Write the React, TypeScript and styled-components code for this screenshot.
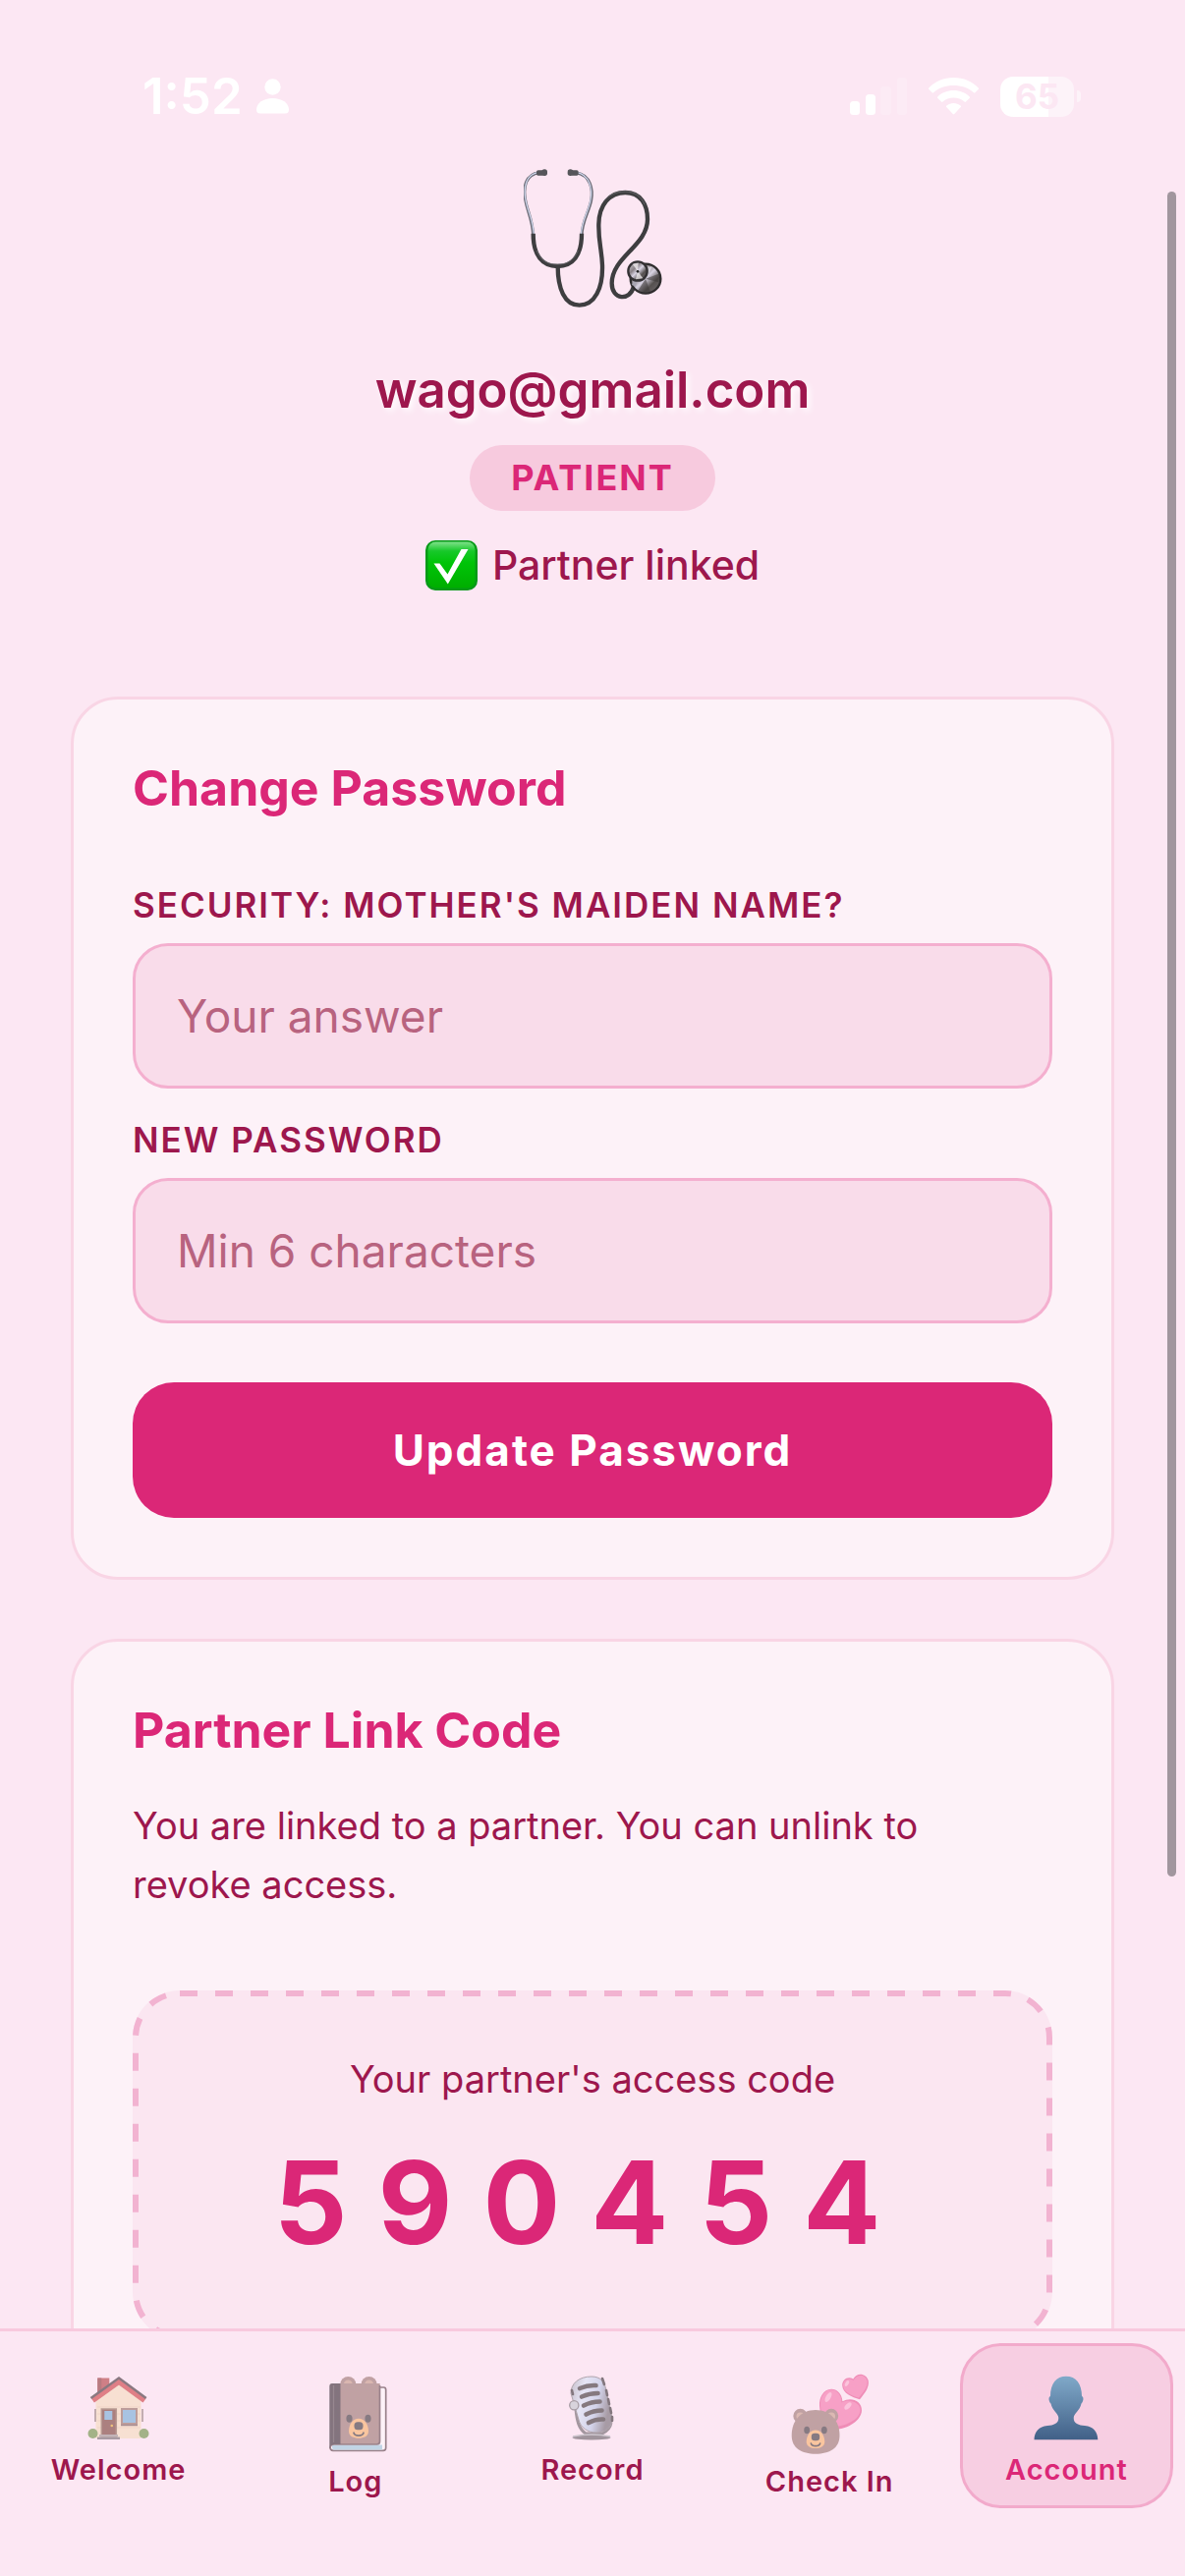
import React from "react";
import styled, { createGlobalStyle } from "styled-components";

const color = {
  page: "#fce7f3",
  card: "#fdf2f8",
  cardBorder: "#f9d5e5",
  field: "#f9dcea",
  fieldBorder: "#f4afcf",
  placeholder: "#b8637f",
  pill: "#f7cade",
  line: "#f8c9de",
  active: "#f7cee2",
  activeBorder: "#f2aacb",
  dash: "#f2b3d1",
  deep: "#9d174d",
  accent: "#db2777",
};

const GlobalStyle = createGlobalStyle`
  *, *::before, *::after { box-sizing: border-box; }
  body {
    margin: 0;
    background: ${color.page};
    color: ${color.deep};
    font-family: Inter, "Liberation Sans", sans-serif;
    -webkit-font-smoothing: antialiased;
  }
  h1, h2, p { margin: 0; }
`;

const Screen = styled.div`
  position: relative;
  display: flex;
  flex-direction: column;
  height: 100vh;
  overflow: hidden;
`;

const StatusBar = styled.header`
  flex: none;
  display: flex;
  align-items: center;
  justify-content: space-between;
  padding: 68px 106px 0 145px;
  color: #fff;
`;

const StatusGroup = styled.div<{ $gap: number }>`
  display: flex;
  align-items: center;
  gap: ${(p) => p.$gap}px;
`;

const Clock = styled.time`
  font-size: 51px;
  line-height: 60px;
  font-weight: 600;
`;

const Battery = styled.div`
  display: flex;
  align-items: center;
  gap: 3px;
`;

const BatteryBody = styled.span`
  width: 75px;
  height: 41px;
  border-radius: 13px;
  background: linear-gradient(90deg, #fff 65%, #fdf3f9 65%);
  color: ${color.page};
  font-size: 35px;
  line-height: 41px;
  font-weight: 700;
  text-align: center;
`;

const BatteryTip = styled.span`
  width: 4px;
  height: 12px;
  border-radius: 0 6px 6px 0;
  background: #fdf3f9;
`;

const Content = styled.main`
  flex: 1;
  min-height: 0;
  overflow-y: auto;
  scrollbar-width: none;
  padding: 44px 72px 0;
`;

const Profile = styled.section`
  display: flex;
  flex-direction: column;
  align-items: center;
  margin-bottom: 108px;
`;

const Email = styled.h1`
  margin-top: 51px;
  font-size: 51px;
  line-height: 66px;
  font-weight: 600;
  text-shadow: 3px 3px 6px rgba(255, 255, 255, 0.9);
`;

const RolePill = styled.span`
  margin-top: 23px;
  padding: 12px 42px;
  border-radius: 34px;
  background: ${color.pill};
  color: ${color.accent};
  font-size: 36px;
  line-height: 43px;
  font-weight: 700;
  letter-spacing: 2px;
`;

const LinkStatus = styled.p`
  display: flex;
  align-items: center;
  gap: 15px;
  margin-top: 30px;
  font-size: 41px;
  line-height: 51px;
  font-weight: 500;
`;

const Card = styled.section`
  margin-bottom: 60px;
  padding: 60px;
  border: 3px solid ${color.cardBorder};
  border-radius: 48px;
  background: ${color.card};
`;

const CardTitle = styled.h2`
  margin-bottom: 36px;
  color: ${color.accent};
  font-size: 50px;
  line-height: 61px;
  font-weight: 700;
`;

const Field = styled.div`
  display: flex;
  flex-direction: column;
  gap: 17px;
  padding-top: 31px;
`;

const FieldLabel = styled.label`
  font-size: 35px;
  line-height: 43px;
  font-weight: 600;
  letter-spacing: 2px;
`;

const TextInput = styled.input`
  width: 100%;
  height: 148px;
  padding: 0 42px;
  border: 3px solid ${color.fieldBorder};
  border-radius: 36px;
  outline: none;
  background: ${color.field};
  color: ${color.deep};
  font: 400 46px/58px Inter, "Liberation Sans", sans-serif;
  &::placeholder {
    color: ${color.placeholder};
    opacity: 1;
  }
`;

const PrimaryButton = styled.button`
  display: block;
  width: 100%;
  height: 138px;
  margin-top: 60px;
  padding: 0;
  border: 0;
  border-radius: 42px;
  background: ${color.accent};
  color: #fff;
  font: 700 44px/54px Inter, "Liberation Sans", sans-serif;
  letter-spacing: 2px;
`;

const Note = styled.p`
  padding-right: 36px;
  font-size: 38px;
  line-height: 60px;
`;

const CodeBox = styled.div`
  position: relative;
  margin-top: 78px;
  padding: 66px;
  border-radius: 48px;
  background: #fbe6f1;
  text-align: center;
`;

const DashedOutline = styled.svg`
  position: absolute;
  inset: 0;
  width: 100%;
  height: 100%;
  rect {
    x: 3px;
    y: 3px;
    width: calc(100% - 6px);
    height: calc(100% - 6px);
    rx: 45px;
    fill: none;
    stroke: ${color.dash};
    stroke-width: 6px;
    stroke-dasharray: 18px 18px;
  }
`;

const CodeCaption = styled.p`
  font-size: 38px;
  line-height: 48px;
`;

const Code = styled.p`
  margin-top: 29px;
  color: ${color.accent};
  font-size: 117px;
  line-height: 146px;
  font-weight: 700;
  letter-spacing: 31px;
`;

const ScrollThumb = styled.div`
  position: absolute;
  top: 195px;
  right: 9px;
  width: 9px;
  height: 1715px;
  border-radius: 5px;
  background: #a1969e;
`;

const TabBar = styled.nav`
  flex: none;
  display: grid;
  grid-template-columns: repeat(5, 1fr);
  align-items: start;
  min-height: 252px;
  padding-top: 12px;
  border-top: 3px solid ${color.line};
  background: ${color.page};
`;

const Tab = styled.a<{ $active?: boolean }>`
  display: flex;
  flex-direction: column;
  align-items: center;
  gap: 6px;
  margin: 0 12px;
  padding: 18px 0;
  border: 3px solid ${(p) => (p.$active ? color.activeBorder : "transparent")};
  border-radius: 42px;
  background: ${(p) => (p.$active ? color.active : "transparent")};
  color: ${(p) => (p.$active ? color.accent : color.deep)};
  font-size: 29px;
  line-height: 36px;
  font-weight: 600;
  letter-spacing: 1px;
  text-decoration: none;
`;

const PersonGlyph = () => (
  <svg width="33" height="36" viewBox="0 0 33 36" fill="#fff" aria-hidden="true">
    <circle cx="16.500" cy="8.500" r="8.200" />
    <path d="M4 35.500C1 35.500 0 34 0 31.500C0 25 7 20 16.500 20S33 25 33 31.500C33 34 32 35.500 29 35.500Z" />
  </svg>
);

const SignalGlyph = () => (
  <svg width="58" height="38" viewBox="0 0 58 38" fill="#fff" aria-hidden="true">
    <rect x="0" y="24" width="10" height="14" rx="3.500" />
    <rect x="16" y="17" width="10" height="21" rx="3.500" />
    <rect x="31" y="9" width="11" height="29" rx="3.500" opacity="0.200" />
    <rect x="48" y="0" width="10" height="38" rx="3.500" opacity="0.200" />
  </svg>
);

const WifiGlyph = () => (
  <svg width="51" height="38" viewBox="0 0 51 38" fill="#fff" aria-hidden="true">
    <path d="M25.500 0C35.500 0 44.500 4 50.500 10.200C51.200 10.900 51.200 11.400 50.600 12L47.400 15.200C46.900 15.700 46.400 15.700 45.900 15.200C40.500 10.300 33.500 8 25.500 8S10.500 10.300 5.100 15.200C4.600 15.700 4.100 15.700 3.600 15.200L0.400 12C-0.200 11.400 -0.200 10.900 0.500 10.200C6.500 4 15.500 0 25.500 0Z" />
    <path d="M25.500 13C31.800 13 37.300 15.300 41.500 19.200C42.200 19.900 42.200 20.300 41.600 20.900L38 24.500C37.500 25 37 25 36.500 24.500C33.500 22 29.800 20.500 25.500 20.500S17.500 22 14.500 24.500C14 25 13.500 25 13 24.500L9.400 20.900C8.800 20.300 8.800 19.900 9.500 19.200C13.700 15.300 19.200 13 25.500 13Z" />
    <path d="M25.500 26C28.200 26 30.600 26.900 32.600 28.400C33.200 28.900 33.200 29.400 32.700 29.900L26.500 36.700C25.800 37.400 25.200 37.400 24.500 36.700L18.300 29.900C17.800 29.400 17.800 28.900 18.400 28.400C20.400 26.900 22.800 26 25.500 26Z" />
  </svg>
);

const Stethoscope = () => (
  <svg width="141" height="141" viewBox="98 66 423 423" fill="none" role="img" aria-label="Stethoscope">
    <defs>
      <linearGradient id="disc" x1="0" y1="0" x2="1" y2="1">
        <stop offset="0" stopColor="#d9d5dc" />
        <stop offset="0.350" stopColor="#8b8388" />
        <stop offset="0.500" stopColor="#d8d3e2" />
        <stop offset="0.700" stopColor="#55504f" />
        <stop offset="1" stopColor="#777174" />
      </linearGradient>
    </defs>
    <g stroke="#6c6c76" strokeWidth="9">
      <path d="M145 77C103 82 97 122 102 155C108 195 124 215 127 268" />
      <path d="M258 77C303 84 310 130 304 162C297 198 277 222 275 268" />
    </g>
    <g stroke="#ccd3e8" strokeWidth="4">
      <path d="M145 76C104 81 98 122 103 155C109 195 126 215 129 268" />
      <path d="M258 76C302 83 308 130 302 162C295 198 275 222 273 268" />
    </g>
    <g fill="#56565a">
      <rect x="137" y="70" width="23" height="16" rx="5" />
      <rect x="153" y="67" width="17" height="20" rx="8" />
      <rect x="242" y="70" width="23" height="16" rx="5" />
      <rect x="232" y="67" width="17" height="20" rx="8" />
    </g>
    <g stroke="#3e3e40" strokeWidth="13">
      <path d="M127 263C127 330 155 363 201 363C248 363 275 330 275 263" />
      <path d="M202 363C202 430 222 482 268 482C315 482 340 430 338 360C336 310 326 290 327 235C328 175 360 138 408 138C455 138 476 175 476 220C476 300 367 335 367 415C367 467 422 470 434 425" />
    </g>
    <path d="M138 315C150 347 172 357 201 357C230 357 250 347 264 315" stroke="#75757a" strokeWidth="2" />
    <path d="M342 165C357 145 380 135 408 135C438 135 458 150 467 175" stroke="#75757a" strokeWidth="2" />
    <ellipse cx="470" cy="401" rx="46" ry="45" fill="url(#disc)" stroke="#2e2c2d" strokeWidth="7" />
    <path d="M470 401L445 440L485 442ZM470 401L510 412L514 385Z" fill="#3c3839" opacity="0.550" />
    <path d="M470 401L460 362L490 365Z" fill="#ece9f2" opacity="0.700" />
    <path d="M434 398L428 420L440 425L446 400Z" fill="#a9a6b2" />
    <circle cx="446" cy="378" r="29" fill="url(#disc)" stroke="#333133" strokeWidth="7" />
    <path d="M446 378L430 356L448 353ZM446 378L462 400L440 403Z" fill="#f3eff2" opacity="0.750" />
    <circle cx="446" cy="379" r="4" fill="#222" />
  </svg>
);

const CheckMark = () => (
  <svg width="53" height="51" viewBox="0 0 53 51" role="img" aria-label="Yes">
    <defs>
      <linearGradient id="tick" x1="0" y1="0" x2="0" y2="1">
        <stop offset="0" stopColor="#7fe08a" />
        <stop offset="0.200" stopColor="#17c82a" />
        <stop offset="0.450" stopColor="#00c408" />
        <stop offset="1" stopColor="#00ae00" />
      </linearGradient>
    </defs>
    <rect width="53" height="51" rx="10" fill="#069a17" />
    <rect x="2.500" y="1.500" width="48" height="47" rx="8" fill="url(#tick)" />
    <path d="M8.500 23.500H14.500L22.500 34.500L36.500 9H43.500L22.800 44.500Z" fill="#fff" />
  </svg>
);

const HouseIcon = () => (
  <svg width="84" height="84" viewBox="0 0 84 84" aria-hidden="true">
    <rect x="20.300" y="14.500" width="12" height="20" fill="#cf7f86" />
    <rect x="20.300" y="14.500" width="4" height="20" fill="#b87a80" />
    <path d="M18.500 37L42 18L64.500 37V76H18.500Z" fill="#f7e0d2" />
    <path d="M20 44H64M20 51H64M20 58H64M20 65H64" stroke="#f0d5c7" strokeWidth="1" />
    <path d="M18 46V59M66 46V59" stroke="#b09a9c" strokeWidth="1.500" />
    <path d="M15.500 37.500L42 18.500L68 37.500" fill="none" stroke="#df7f86" strokeWidth="5" />
    <path d="M13.500 35L42 14.500L69.700 35" fill="none" stroke="#8a7880" strokeWidth="2.500" />
    <rect x="24.300" y="46" width="15" height="28" fill="#ab807f" stroke="#b89a93" strokeWidth="1.500" />
    <rect x="27.300" y="48" width="8" height="9" fill="#a8c3e2" />
    <circle cx="34.800" cy="63" r="1.300" fill="#f0c27d" />
    <rect x="45" y="46" width="15" height="15" fill="#a8c3e2" stroke="#bd9d9b" strokeWidth="2" />
    <path d="M44 62.500H61" stroke="#a98f92" strokeWidth="1.500" />
    <circle cx="15.500" cy="71" r="5" fill="#a3b287" />
    <circle cx="67.500" cy="71" r="5" fill="#a3b287" />
    <rect x="22" y="72" width="19" height="2.500" fill="#c3b4b8" />
    <rect x="20" y="74.500" width="23" height="2.500" fill="#a99ba3" />
  </svg>
);

const BearFace = () => (
  <g>
    <ellipse cx="-9.500" cy="-10" rx="3.100" ry="4" fill="#867a82" />
    <ellipse cx="9.500" cy="-10" rx="3.100" ry="4" fill="#867a82" />
    <path d="M0 -10C6 -10 10 -4 10 3C10 8 5 10 0 10S-10 8 -10 3C-10 -4 -6 -10 0 -10Z" fill="#f9c59f" />
    <rect x="-4.500" y="-6.500" width="9" height="8" rx="3.500" fill="#867a82" />
    <path d="M-5 4.500C-4 8.300 4 8.300 5 4.500" fill="none" stroke="#867a82" strokeWidth="1.700" strokeLinecap="round" />
  </g>
);

const BearBookIcon = () => (
  <svg width="96" height="96" viewBox="0 0 96 96" aria-hidden="true">
    <path d="M72 24H76.500Q78.700 24 78.700 26.500V85.500Q78.700 88.300 76 88.300H25Q22 88.300 22 85" fill="#fdf2f8" stroke="#9a828b" strokeWidth="1.700" />
    <path d="M24 82.500H75V87.500H26Q24 87.500 24 85Z" fill="#c2d5e5" />
    <circle cx="40.300" cy="21" r="8" fill="#c0a1a3" />
    <circle cx="61.600" cy="21" r="8" fill="#c0a1a3" />
    <circle cx="40.300" cy="21" r="4.500" fill="#d9b6b0" />
    <circle cx="61.600" cy="21" r="4.500" fill="#d9b6b0" />
    <path d="M32 20H72.700V79Q72.700 82 69.500 82H32Z" fill="#c0a1a3" />
    <path d="M72.500 22V79Q72.500 82 69.500 82H26Q22 82 22 86" fill="none" stroke="#9a828b" strokeWidth="1.700" />
    <path d="M24 20H32.500V82H26Q22.500 82 21.300 86V23Q21.300 20 24 20Z" fill="#83747e" />
    <path d="M25.500 22V80" stroke="#978890" strokeWidth="1.300" />
    <g transform="translate(51 65.700)">
      <BearFace />
    </g>
  </svg>
);

const MicIcon = () => (
  <svg width="84" height="84" viewBox="0 0 84 84" aria-hidden="true">
    <defs>
      <linearGradient id="mic" x1="0" y1="0" x2="1" y2="0.300">
        <stop offset="0" stopColor="#c5bdc8" />
        <stop offset="0.350" stopColor="#e6e5f5" />
        <stop offset="0.700" stopColor="#d3d3ea" />
        <stop offset="1" stopColor="#a79ba5" />
      </linearGradient>
    </defs>
    <path d="M25 46C26 58 28 66 35 71H52C56 69 60 66 61 60" fill="none" stroke="#a3979f" strokeWidth="3" />
    <path d="M20 30C20 20 28 13 41 13C50 13 54 18 55.500 25L62 55C63 65 54 70 46 70C37 70 30 65 28 57Z" fill="url(#mic)" stroke="#b0a5ad" strokeWidth="1" />
    <path d="M52 15L54 21M56 27L57 32M58 36L59 41M60 45L61 50M62 54V58M21 27L22 31" stroke="#83777e" strokeWidth="2.600" strokeLinecap="round" />
    <path d="M29 25Q37 21.500 45.500 22M31 33.500Q39 30 47.500 30M33 42.500Q41 38.500 49.500 38.500M35.500 51.500Q43 47.500 51.500 47.500M38 60Q45 56 53 56.500" fill="none" stroke="#85797f" strokeWidth="4.600" strokeLinecap="round" />
    <circle cx="23.300" cy="42.300" r="4.600" fill="#d8d3dc" stroke="#a79ca4" strokeWidth="1.300" />
    <ellipse cx="41" cy="75" rx="19.500" ry="2.500" fill="#a0949c" />
    <path d="M22 74Q41 70 60 74" stroke="#cbc4cc" strokeWidth="1.300" fill="none" />
  </svg>
);

const BearHeartsIcon = () => (
  <svg width="96" height="96" viewBox="0 0 96 96" aria-hidden="true">
    <path d="M61.400 38.300C61 30 55 25.500 50 25.700C42 26 37.500 34 38 43C38.500 55 46 64 54 67C67 66 80.500 58 81 47.500C81.500 38 70 33 61.400 38.300Z" fill="#ef8db7" />
    <path d="M60.500 39.500C60.500 31 55 26.300 50 26.500C43 26.500 38.500 34 39 43C40 54 46 61 54 64C66 63 79 56 79.500 47.500C80 39 68 35 60.500 39.500Z" fill="#f7a0c6" />
    <ellipse cx="47" cy="34" rx="2.500" ry="5.500" transform="rotate(30 47 34)" fill="#fbc4dc" />
    <ellipse cx="67" cy="43" rx="2.300" ry="4.500" transform="rotate(45 67 43)" fill="#fbc4dc" />
    <path d="M72.300 15.500C67 12 61 16 61.200 22C61.500 30 71 34 79 36.300C84 30 89 24 87.700 17C86 10 76 8 72.300 15.500Z" fill="#ef8db7" />
    <path d="M72.500 17C67.500 13.500 62 17 62 22C62.500 29 71 32.500 78 34.500C83 28.500 87.500 23 86.500 17.500C85 11 76.500 9.500 72.500 17Z" fill="#f7a0c6" />
    <ellipse cx="66" cy="20" rx="1.700" ry="3.200" transform="rotate(30 66 20)" fill="#fbc4dc" />
    <circle cx="18.500" cy="53" r="7.200" fill="#c0a1a3" />
    <circle cx="50" cy="53" r="7.200" fill="#c0a1a3" />
    <circle cx="18.500" cy="53.500" r="4" fill="#dcb9b3" />
    <circle cx="50" cy="53.500" r="4" fill="#dcb9b3" />
    <path d="M34 47C49 47 58.500 58 58.500 73C58.500 86 48 91.700 34 91.700S9.700 86 9.700 73C9.700 58 19 47 34 47Z" fill="#c0a1a3" />
    <g transform="translate(34 76.800) scale(0.930)">
      <BearFace />
    </g>
  </svg>
);

const BustIcon = () => (
  <svg width="84" height="84" viewBox="0 0 84 84" aria-hidden="true">
    <defs>
      <linearGradient id="bust" x1="0" y1="0" x2="0" y2="1">
        <stop offset="0" stopColor="#80a9c9" />
        <stop offset="1" stopColor="#416087" />
      </linearGradient>
    </defs>
    <path d="M42 12.700C52 12.700 58 20 58 33C60.500 33.500 59.500 39 57.500 40.500C56 48 50 50 49.700 55C49.500 61 55 62.500 61 63C70 64 74 69 74.300 77.300H9.500C9.800 69 14 64 23 63C29 62.500 34.500 61 34.300 55C34 50 28 48 26.500 40.500C24.500 39 23.500 33.500 26 33C26 20 32 12.700 42 12.700Z" fill="url(#bust)" />
  </svg>
);

const tabs = [
  { label: "Welcome", href: "#welcome", Icon: HouseIcon },
  { label: "Log", href: "#log", Icon: BearBookIcon },
  { label: "Record", href: "#record", Icon: MicIcon },
  { label: "Check In", href: "#check-in", Icon: BearHeartsIcon },
  { label: "Account", href: "#account", Icon: BustIcon, active: true },
];

export default function App() {
  return (
    <>
      <GlobalStyle />
      <Screen>
        <StatusBar>
          <StatusGroup $gap={14}>
            <Clock>1:52</Clock>
            <PersonGlyph />
          </StatusGroup>
          <StatusGroup $gap={22}>
            <SignalGlyph />
            <WifiGlyph />
            <Battery>
              <BatteryBody>65</BatteryBody>
              <BatteryTip />
            </Battery>
          </StatusGroup>
        </StatusBar>

        <Content>
          <Profile>
            <Stethoscope />
            <Email>wago@gmail.com</Email>
            <RolePill>PATIENT</RolePill>
            <LinkStatus>
              <CheckMark />
              Partner linked
            </LinkStatus>
          </Profile>

          <Card as="form">
            <CardTitle>Change Password</CardTitle>
            <Field>
              <FieldLabel htmlFor="answer">SECURITY: MOTHER'S MAIDEN NAME?</FieldLabel>
              <TextInput id="answer" type="text" placeholder="Your answer" />
            </Field>
            <Field>
              <FieldLabel htmlFor="password">NEW PASSWORD</FieldLabel>
              <TextInput id="password" type="password" placeholder="Min 6 characters" />
            </Field>
            <PrimaryButton type="button">Update Password</PrimaryButton>
          </Card>

          <Card>
            <CardTitle>Partner Link Code</CardTitle>
            <Note>You are linked to a partner. You can unlink to revoke access.</Note>
            <CodeBox>
              <DashedOutline aria-hidden="true">
                <rect />
              </DashedOutline>
              <CodeCaption>Your partner's access code</CodeCaption>
              <Code>590454</Code>
            </CodeBox>
          </Card>
        </Content>

        <ScrollThumb />

        <TabBar>
          {tabs.map(({ label, href, Icon, active }) => (
            <Tab key={label} href={href} $active={active} aria-current={active ? "page" : undefined}>
              <Icon />
              {label}
            </Tab>
          ))}
        </TabBar>
      </Screen>
    </>
  );
}
